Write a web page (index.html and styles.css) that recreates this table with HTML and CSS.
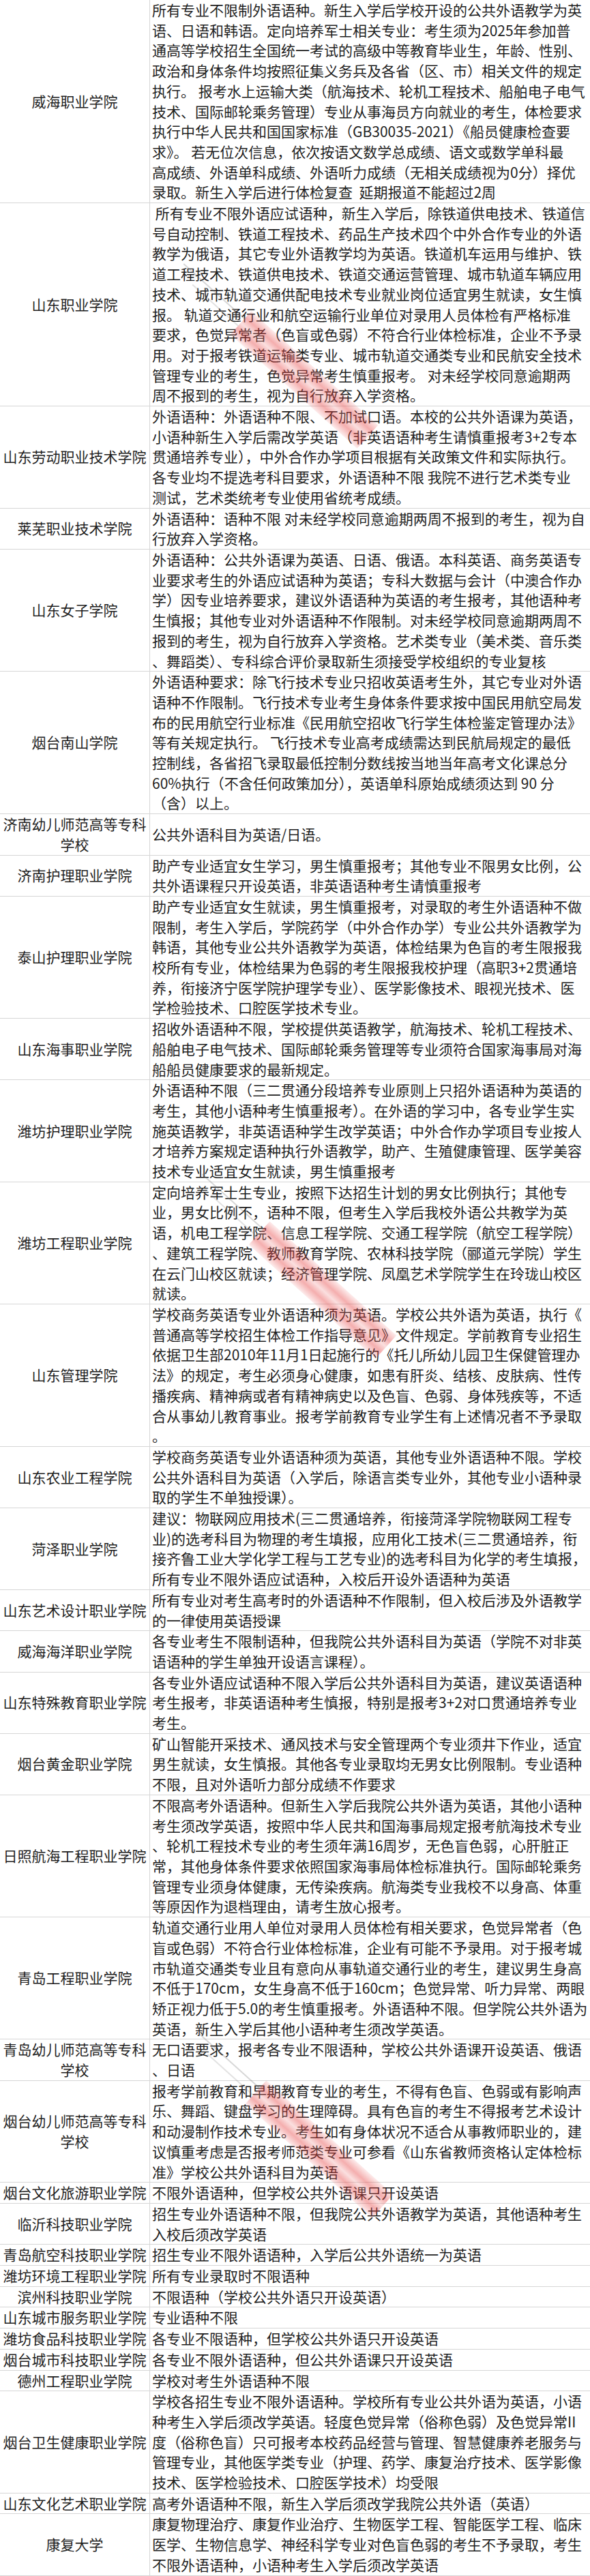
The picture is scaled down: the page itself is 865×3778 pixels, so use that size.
FILE: index.html
```html
<!DOCTYPE html>
<html lang="zh-CN">
<head>
<meta charset="utf-8">
<title>外语语种及体检要求</title>
<link rel="stylesheet" href="styles.css">
</head>
<body>
<div class="sheet">
  <div class="row"><div class="name">威海职业学院</div><div class="desc"><p>所有专业不限制外语语种。新生入学后学校开设的公共外语教学为英<br>语、日语和韩语。定向培养军士相关专业：考生须为2025年参加普<br>通高等学校招生全国统一考试的高级中等教育毕业生，年龄、性别、<br>政治和身体条件均按照征集义务兵及各省（区、市）相关文件的规定<br>执行。 报考水上运输大类（航海技术、轮机工程技术、船舶电子电气<br>技术、国际邮轮乘务管理）专业从事海员方向就业的考生，体检要求<br>执行中华人民共和国国家标准（GB30035-2021）《船员健康检查要<br>求》。 若无位次信息，依次按语文数学总成绩、语文或数学单科最<br>高成绩、外语单科成绩、外语听力成绩（无相关成绩视为0分）择优<br>录取。新生入学后进行体检复查&nbsp; 延期报道不能超过2周</p></div></div>

  <div class="row"><div class="name">山东职业学院</div><div class="desc"><p>&nbsp;所有专业不限外语应试语种，新生入学后，除铁道供电技术、铁道信<br>号自动控制、铁道工程技术、药品生产技术四个中外合作专业的外语<br>教学为俄语，其它专业外语教学均为英语。铁道机车运用与维护、铁<br>道工程技术、铁道供电技术、铁道交通运营管理、城市轨道车辆应用<br>技术、城市轨道交通供配电技术专业就业岗位适宜男生就读，女生慎<br>报。 轨道交通行业和航空运输行业单位对录用人员体检有严格标准<br>要求，色觉异常者（色盲或色弱）不符合行业体检标准，企业不予录<br>用。对于报考铁道运输类专业、城市轨道交通类专业和民航安全技术<br>管理专业的考生，色觉异常考生慎重报考。 对未经学校同意逾期两<br>周不报到的考生，视为自行放弃入学资格。</p></div></div>

  <div class="row"><div class="name">山东劳动职业技术学院</div><div class="desc"><p>外语语种：外语语种不限、不加试口语。本校的公共外语课为英语，<br>小语种新生入学后需改学英语（非英语语种考生请慎重报考3+2专本<br>贯通培养专业），中外合作办学项目根据有关政策文件和实际执行。<br>各专业均不提选考科目要求，外语语种不限 我院不进行艺术类专业<br>测试，艺术类统考专业使用省统考成绩。</p></div></div>

  <div class="row"><div class="name">莱芜职业技术学院</div><div class="desc"><p>外语语种：语种不限 对未经学校同意逾期两周不报到的考生，视为自<br>行放弃入学资格。</p></div></div>

  <div class="row"><div class="name">山东女子学院</div><div class="desc"><p>外语语种：公共外语课为英语、日语、俄语。本科英语、商务英语专<br>业要求考生的外语应试语种为英语；专科大数据与会计（中澳合作办<br>学）因专业培养要求，建议外语语种为英语的考生报考，其他语种考<br>生慎报；其他专业对外语语种不作限制。对未经学校同意逾期两周不<br>报到的考生，视为自行放弃入学资格。艺术类专业（美术类、音乐类<br>、舞蹈类）、专科综合评价录取新生须接受学校组织的专业复核</p></div></div>

  <div class="row"><div class="name">烟台南山学院</div><div class="desc"><p>外语语种要求：除飞行技术专业只招收英语考生外，其它专业对外语<br>语种不作限制。飞行技术专业考生身体条件要求按中国民用航空局发<br>布的民用航空行业标准《民用航空招收飞行学生体检鉴定管理办法》<br>等有关规定执行。 飞行技术专业高考成绩需达到民航局规定的最低<br>控制线，各省招飞录取最低控制分数线按当地当年高考文化课总分<br>60%执行（不含任何政策加分），英语单科原始成绩须达到 90 分<br>（含）以上。</p></div></div>

  <div class="row"><div class="name">济南幼儿师范高等专科<br>学校</div><div class="desc"><p>公共外语科目为英语/日语。</p></div></div>

  <div class="row"><div class="name">济南护理职业学院</div><div class="desc"><p>助产专业适宜女生学习，男生慎重报考；其他专业不限男女比例，公<br>共外语课程只开设英语，非英语语种考生请慎重报考</p></div></div>

  <div class="row"><div class="name">泰山护理职业学院</div><div class="desc"><p>助产专业适宜女生就读，男生慎重报考，对录取的考生外语语种不做<br>限制，考生入学后，学院药学（中外合作办学）专业公共外语教学为<br>韩语，其他专业公共外语教学为英语，体检结果为色盲的考生限报我<br>校所有专业，体检结果为色弱的考生限报我校护理（高职3+2贯通培<br>养，衔接济宁医学院护理学专业）、医学影像技术、眼视光技术、医<br>学检验技术、口腔医学技术专业。</p></div></div>

  <div class="row"><div class="name">山东海事职业学院</div><div class="desc"><p>招收外语语种不限，学校提供英语教学，航海技术、轮机工程技术、<br>船舶电子电气技术、国际邮轮乘务管理等专业须符合国家海事局对海<br>船船员健康要求的最新规定。</p></div></div>

  <div class="row"><div class="name">潍坊护理职业学院</div><div class="desc"><p>外语语种不限（三二贯通分段培养专业原则上只招外语语种为英语的<br>考生，其他小语种考生慎重报考）。在外语的学习中，各专业学生实<br>施英语教学，非英语语种学生改学英语；中外合作办学项目专业按人<br>才培养方案规定语种执行外语教学，助产、生殖健康管理、医学美容<br>技术专业适宜女生就读，男生慎重报考</p></div></div>

  <div class="row"><div class="name">潍坊工程职业学院</div><div class="desc"><p>定向培养军士生专业，按照下达招生计划的男女比例执行；其他专<br>业，男女比例不，语种不限，但考生入学后我校外语公共教学为英<br>语，机电工程学院、信息工程学院、交通工程学院（航空工程学院）<br>、建筑工程学院、教师教育学院、农林科技学院（郦道元学院）学生<br>在云门山校区就读；经济管理学院、凤凰艺术学院学生在玲珑山校区<br>就读。</p></div></div>

  <div class="row"><div class="name">山东管理学院</div><div class="desc"><p>学校商务英语专业外语语种须为英语。学校公共外语为英语，执行《<br>普通高等学校招生体检工作指导意见》文件规定。学前教育专业招生<br>依据卫生部2010年11月1日起施行的《托儿所幼儿园卫生保健管理办<br>法》的规定，考生必须身心健康，如患有肝炎、结核、皮肤病、性传<br>播疾病、精神病或者有精神病史以及色盲、色弱、身体残疾等，不适<br>合从事幼儿教育事业。报考学前教育专业学生有上述情况者不予录取<br>。</p></div></div>

  <div class="row"><div class="name">山东农业工程学院</div><div class="desc"><p>学校商务英语专业外语语种须为英语，其他专业外语语种不限。学校<br>公共外语科目为英语（入学后，除语言类专业外，其他专业小语种录<br>取的学生不单独授课）。</p></div></div>

  <div class="row"><div class="name">菏泽职业学院</div><div class="desc"><p>建议：物联网应用技术(三二贯通培养，衔接菏泽学院物联网工程专<br>业)的选考科目为物理的考生填报，应用化工技术(三二贯通培养，衔<br>接齐鲁工业大学化学工程与工艺专业)的选考科目为化学的考生填报，<br>所有专业不限外语应试语种，入校后开设外语语种为英语</p></div></div>

  <div class="row"><div class="name">山东艺术设计职业学院</div><div class="desc"><p>所有专业对考生高考时的外语语种不作限制，但入校后涉及外语教学<br>的一律使用英语授课</p></div></div>

  <div class="row"><div class="name">威海海洋职业学院</div><div class="desc"><p>各专业考生不限制语种，但我院公共外语科目为英语（学院不对非英<br>语语种的学生单独开设语言课程）。</p></div></div>

  <div class="row"><div class="name">山东特殊教育职业学院</div><div class="desc"><p>各专业外语应试语种不限入学后公共外语科目为英语，建议英语语种<br>考生报考，非英语语种考生慎报，特别是报考3+2对口贯通培养专业<br>考生。</p></div></div>

  <div class="row"><div class="name">烟台黄金职业学院</div><div class="desc"><p>矿山智能开采技术、通风技术与安全管理两个专业须井下作业，适宜<br>男生就读，女生慎报。其他各专业录取均无男女比例限制。专业语种<br>不限，且对外语听力部分成绩不作要求</p></div></div>

  <div class="row"><div class="name">日照航海工程职业学院</div><div class="desc"><p>不限高考外语语种。但新生入学后我院公共外语为英语，其他小语种<br>考生须改学英语，按照中华人民共和国海事局规定报考航海技术专业<br>、轮机工程技术专业的考生须年满16周岁，无色盲色弱，心肝脏正<br>常，其他身体条件要求依照国家海事局体检标准执行。国际邮轮乘务<br>管理专业须身体健康，无传染疾病。航海类专业我校不以身高、体重<br>等原因作为退档理由，请考生放心报考。</p></div></div>

  <div class="row"><div class="name">青岛工程职业学院</div><div class="desc"><p>轨道交通行业用人单位对录用人员体检有相关要求，色觉异常者（色<br>盲或色弱）不符合行业体检标准，企业有可能不予录用。对于报考城<br>市轨道交通类专业且有意向从事轨道交通行业的考生，建议男生身高<br>不低于170cm，女生身高不低于160cm；色觉异常、听力异常、两眼<br>矫正视力低于5.0的考生慎重报考。外语语种不限。但学院公共外语为<br>英语，新生入学后其他小语种考生须改学英语。</p></div></div>

  <div class="row"><div class="name">青岛幼儿师范高等专科<br>学校</div><div class="desc"><p>无口语要求，报考各专业不限语种，学校公共外语课开设英语、俄语<br>、日语</p></div></div>

  <div class="row"><div class="name">烟台幼儿师范高等专科<br>学校</div><div class="desc"><p>报考学前教育和早期教育专业的考生，不得有色盲、色弱或有影响声<br>乐、舞蹈、键盘学习的生理障碍。具有色盲的考生不得报考艺术设计<br>和动漫制作技术专业。考生如有身体状况不适合从事教师职业的，建<br>议慎重考虑是否报考师范类专业可参看《山东省教师资格认定体检标<br>准》学校公共外语科目为英语</p></div></div>

  <div class="row"><div class="name">烟台文化旅游职业学院</div><div class="desc"><p>不限外语语种，但学校公共外语课只开设英语</p></div></div>

  <div class="row"><div class="name">临沂科技职业学院</div><div class="desc"><p>招生专业外语语种不限，但我院公共外语教学为英语，其他语种考生<br>入校后须改学英语</p></div></div>

  <div class="row"><div class="name">青岛航空科技职业学院</div><div class="desc"><p>招生专业不限外语语种，入学后公共外语统一为英语</p></div></div>

  <div class="row"><div class="name">潍坊环境工程职业学院</div><div class="desc"><p>所有专业录取时不限语种</p></div></div>

  <div class="row"><div class="name">滨州科技职业学院</div><div class="desc"><p>不限语种（学校公共外语只开设英语）</p></div></div>

  <div class="row"><div class="name">山东城市服务职业学院</div><div class="desc"><p>专业语种不限</p></div></div>

  <div class="row"><div class="name">潍坊食品科技职业学院</div><div class="desc"><p>各专业不限语种，但学校公共外语只开设英语</p></div></div>

  <div class="row"><div class="name">烟台城市科技职业学院</div><div class="desc"><p>各专业不限外语语种，但公共外语课只开设英语</p></div></div>

  <div class="row"><div class="name">德州工程职业学院</div><div class="desc"><p>学校对考生外语语种不限</p></div></div>

  <div class="row"><div class="name">烟台卫生健康职业学院</div><div class="desc"><p>学校各招生专业不限外语语种。学校所有专业公共外语为英语，小语<br>种考生入学后须改学英语。轻度色觉异常（俗称色弱）及色觉异常II<br>度（俗称色盲）只可报考本校药品经营与管理、智慧健康养老服务与<br>管理专业，其他医学类专业（护理、药学、康复治疗技术、医学影像<br>技术、医学检验技术、口腔医学技术）均受限</p></div></div>

  <div class="row"><div class="name">山东文化艺术职业学院</div><div class="desc"><p>高考外语语种不限，新生入学后须改学我院公共外语（英语）</p></div></div>

  <div class="row"><div class="name">康复大学</div><div class="desc"><p>康复物理治疗、康复作业治疗、生物医学工程、智能医学工程、临床<br>医学、生物信息学、神经科学专业对色盲色弱的考生不予录取，考生<br>不限外语语种，小语种考生入学后须改学英语</p></div></div>

  <div class="wm wm-1"></div>
  <div class="wm wm-2"></div>
  <div class="wm wm-3"></div>
</div>
</body>
</html>
```

FILE: styles.css
```css
html, body {
  margin: 0;
  padding: 0;
  background: #ffffff;
}

body {
  font-family: "Noto Sans CJK SC", "Noto Sans", "Liberation Sans", sans-serif;
  font-size: 21px;
  color: #1f1f1f;
}

.sheet {
  position: relative;
  width: 865px;
  overflow: hidden;
}

.row {
  display: grid;
  grid-template-columns: 220px 645px;
  border-bottom: 1px solid #d6d6d6;
  line-height: 29.7px;
}

.name {
  display: flex;
  align-items: center;
  justify-content: center;
  text-align: center;
  white-space: nowrap;
  border-right: 1px solid #d6d6d6;
}

.desc {
  display: flex;
  align-items: center;
  padding-left: 3px;
  white-space: nowrap;
}

.desc p {
  margin: 0;
}

/* diagonal stamp watermarks lying over the table */
.wm {
  position: absolute;
  width: 250px;
  height: 46px;
  transform: rotate(42deg);
  pointer-events: none;
  background: linear-gradient(to bottom,
    rgba(236, 96, 96, 0.12) 0%,
    rgba(230, 62, 62, 0.42) 28%,
    rgba(240, 150, 150, 0.30) 50%,
    rgba(230, 62, 62, 0.42) 72%,
    rgba(236, 96, 96, 0.12) 100%);
}

.wm::before {
  content: "";
  position: absolute;
  right: 100%;
  top: 14px;
  width: 120px;
  height: 2px;
  background: rgba(110, 110, 110, 0.28);
}

.wm::after {
  content: "";
  position: absolute;
  right: 100%;
  top: 28px;
  width: 90px;
  height: 2px;
  background: rgba(110, 110, 110, 0.2);
}

.wm-1 { left: 321px; top: 534px; }
.wm-2 { left: 348px; top: 1869px; }
.wm-3 { left: 343px; top: 3129px; }
```
